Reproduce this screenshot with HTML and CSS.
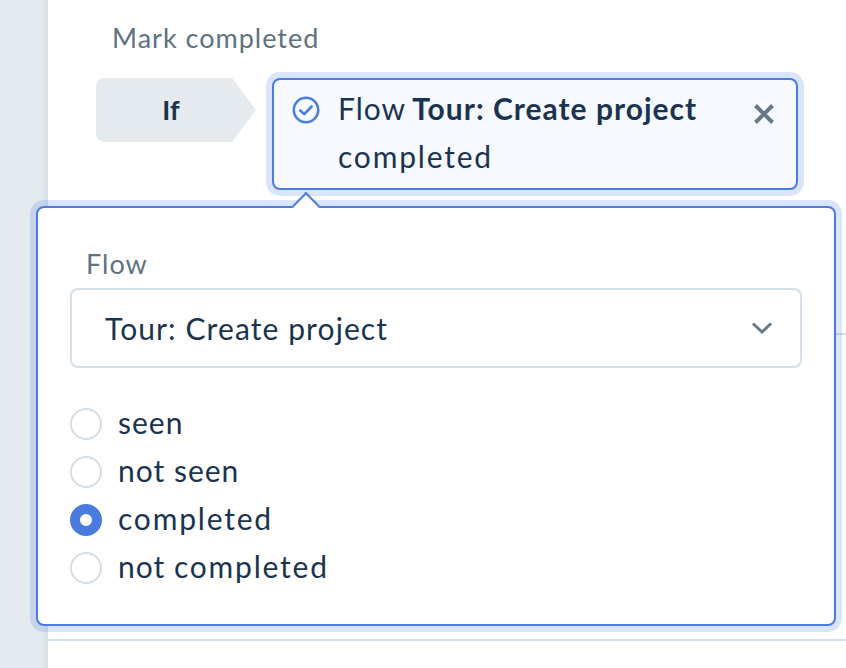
FILE: index.html
```html
<!DOCTYPE html>
<html lang="en">
<head>
  <meta charset="UTF-8" />
  <title>Mark completed</title>
  <link rel="stylesheet" href="styles.css">
</head>
<body>

<div class="page">
  <div class="sidebar"></div>
  <div class="main">
    <div class="section">
      <div class="step-name">Mark completed</div>
      <div class="rule">
        <div class="if-tag">If</div>
        <div class="chip">
          <svg class="chip-icon" width="28" height="28" viewBox="0 0 28 28" fill="none">
            <circle cx="14" cy="14" r="12.2" stroke="#4a7bdf" stroke-width="2.5"/>
            <path d="M8.200 14.500l4 3.600 7.400-7.600" stroke="#4a7bdf" stroke-width="2.600" stroke-linecap="round" stroke-linejoin="round"/>
          </svg>
          <div class="chip-text">Flow <strong>Tour: Create project</strong> <span class="wide">completed</span></div>
          <svg class="chip-close" width="24" height="24" viewBox="0 0 24 24" fill="none">
            <path d="M3.5 3.5l17 17M20.500 3.500l-17 17" stroke="#66798a" stroke-width="4"/>
          </svg>
        </div>
      </div>
    </div>
    <div class="section section-lower"></div>
  </div>

  <div class="popover">
    <div class="caret"></div>
    <div class="field-label">Flow</div>
    <div class="select">
      <span>Tour: Create project</span>
      <svg width="22" height="14" viewBox="0 0 22 14" fill="none">
        <path d="M2 2.500l9 8.500 9-8.500" stroke="#66798a" stroke-width="3"/>
      </svg>
    </div>
    <div class="radio-list">
      <div class="radio-row"><span class="radio"></span><span class="radio-label">seen</span></div>
      <div class="radio-row"><span class="radio"></span><span class="radio-label">not seen</span></div>
      <div class="radio-row"><span class="radio checked"></span><span class="radio-label wide">completed</span></div>
      <div class="radio-row"><span class="radio"></span><span class="radio-label">not <span class="wide">completed</span></span></div>
    </div>
  </div>
</div>

</body>
</html>
```

FILE: styles.css
```css
* { box-sizing: border-box; }
body {
  margin: 0;
  font-family: Lato, "Open Sans", sans-serif;
  color: #1a3450;
  background: white;
}
.page {
  position: relative;
  display: flex;
  height: 668px;
  overflow: hidden;
}
.sidebar {
  width: 48px;
  background: linear-gradient(to right, #e5eaee 85%, #d6dfe6 100%);
}
.main { flex: 1; }
.section {
  height: 335px;
  padding-top: 20px;
  border-bottom: 2px solid #d3dee6;
}
.section-lower { height: 306px; }
.step-name {
  margin-left: 64px;
  font-size: 27px;
  letter-spacing: 1px;
  line-height: 36px;
  color: #5f7280;
}
.rule {
  display: flex;
  gap: 16px;
  margin: 22px 0 0 48px;
  align-items: flex-start;
}
.if-tag {
  position: relative;
  width: 136px;
  height: 64px;
  margin-right: 24px;
  padding-left: 14px;
  padding-bottom: 2px;
  display: flex;
  align-items: center;
  justify-content: center;
  font-size: 27px;
  font-weight: 700;
  background: #e5eaee;
  border-radius: 8px 0 0 8px;
}
.if-tag::after {
  content: "";
  position: absolute;
  left: 100%;
  top: 0;
  width: 24px;
  height: 64px;
  background: #e5eaee;
  clip-path: polygon(0 0, 100% 50%, 0 100%);
}
.chip {
  display: flex;
  width: 526px;
  height: 112px;
  padding: 4px 20px 0 18px;
  background: #f6f9ff;
  border: 2px solid #4a7bdf;
  border-radius: 8px;
  box-shadow: 0 0 0 6px rgba(74,123,223,0.2);
}
.chip-icon { margin-top: 12px; flex: none; }
.chip-text {
  width: 400px;
  margin-left: 18px;
  font-size: 30px;
  letter-spacing: 1px;
  line-height: 48px;
}
.chip-text strong { margin-left: -2px; }
.chip-close { margin: 18px 0 0 auto; flex: none; }
.wide { letter-spacing: 1.8px; }
.popover {
  position: absolute;
  left: 36px;
  top: 206px;
  width: 800px;
  height: 420px;
  padding: 38px 32px 0;
  background: white;
  border: 2px solid #4a7bdf;
  border-radius: 8px;
  box-shadow: 0 0 0 6px rgba(74,123,223,0.2);
}
.caret {
  position: absolute;
  left: 258px;
  top: -12px;
  width: 20px;
  height: 20px;
  background: white;
  border-top: 2px solid #4a7bdf;
  border-left: 2px solid #4a7bdf;
  transform: rotate(45deg);
}
.field-label {
  margin-left: 16px;
  font-size: 27px;
  letter-spacing: 1px;
  line-height: 36px;
  color: #5f7280;
}
.select {
  display: flex;
  align-items: center;
  justify-content: space-between;
  height: 80px;
  margin-top: 6px;
  padding: 0 27px 0 33px;
  font-size: 30px;
  letter-spacing: 1.1px;
  border: 2px solid #d3dee6;
  border-radius: 8px;
}
.radio-list { margin-top: 32px; }
.radio-row {
  display: flex;
  align-items: center;
  gap: 16px;
  height: 48px;
  font-size: 30px;
  letter-spacing: 1px;
}
.radio {
  width: 32px;
  height: 32px;
  border: 2px solid #d3dee6;
  border-radius: 50%;
}
.radio.checked {
  border: 10px solid #4a7bdf;
  background: white;
}
.radio-label { padding-bottom: 4px; }
```
